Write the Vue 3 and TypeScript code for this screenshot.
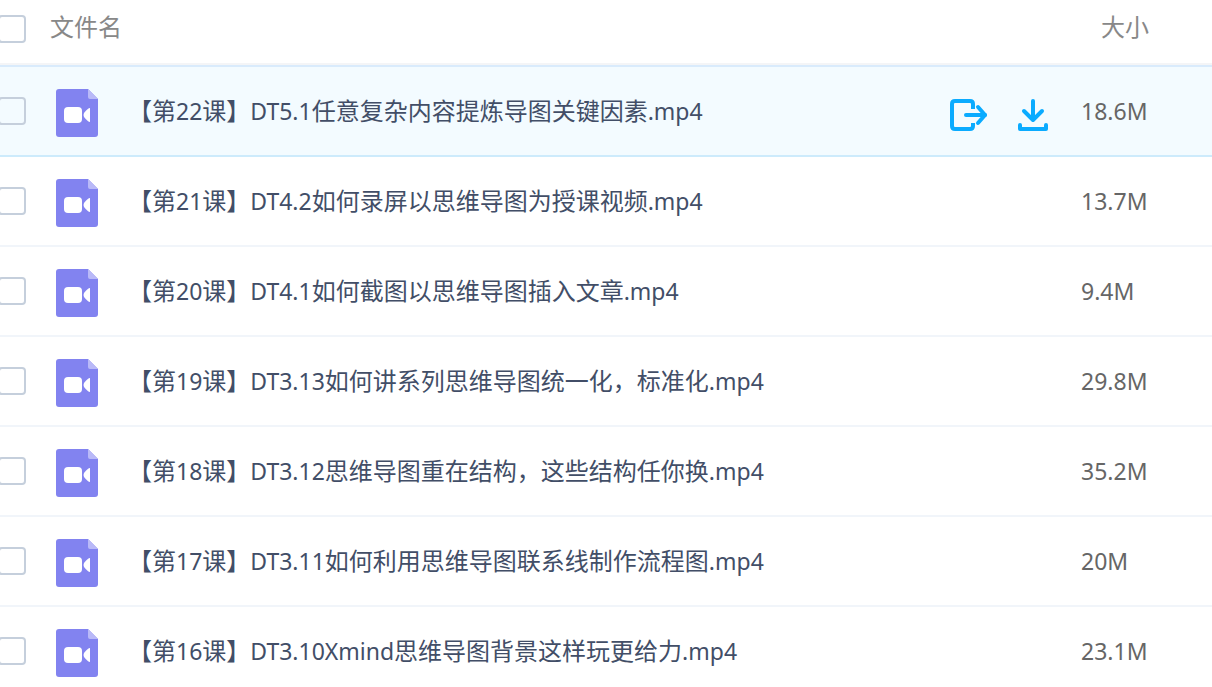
<script setup lang="ts">
import { ref } from 'vue'

interface FileItem {
  id: number
  name: string
  size: string
}

const files: FileItem[] = [
  { id: 22, name: '【第22课】DT5.1任意复杂内容提炼导图关键因素.mp4', size: '18.6M' },
  { id: 21, name: '【第21课】DT4.2如何录屏以思维导图为授课视频.mp4', size: '13.7M' },
  { id: 20, name: '【第20课】DT4.1如何截图以思维导图插入文章.mp4', size: '9.4M' },
  { id: 19, name: '【第19课】DT3.13如何讲系列思维导图统一化，标准化.mp4', size: '29.8M' },
  { id: 18, name: '【第18课】DT3.12思维导图重在结构，这些结构任你换.mp4', size: '35.2M' },
  { id: 17, name: '【第17课】DT3.11如何利用思维导图联系线制作流程图.mp4', size: '20M' },
  { id: 16, name: '【第16课】DT3.10Xmind思维导图背景这样玩更给力.mp4', size: '23.1M' },
]

const activeId = ref(22)
const selected = ref<number[]>([])

function toggleAll(event: Event) {
  const checked = (event.target as HTMLInputElement).checked
  selected.value = checked ? files.map((f) => f.id) : []
}

// Latin runs are set slightly smaller than the Chinese text around them.
function runs(name: string): { text: string; latin: boolean }[] {
  return (name.match(/[\x20-\x7e]+|[^\x20-\x7e]+/g) ?? []).map((text) => ({
    text,
    latin: /^[\x20-\x7e]/.test(text),
  }))
}
</script>

<template>
  <main class="file-list">
    <table class="table" lang="zh-CN">
      <colgroup>
        <col class="col-check" />
        <col />
        <col class="col-actions" />
        <col class="col-size" />
      </colgroup>
      <thead>
        <tr>
          <th scope="col">
            <input
              class="check"
              type="checkbox"
              aria-label="全选"
              :checked="selected.length === files.length"
              @change="toggleAll"
            />
          </th>
          <th scope="col" class="head-text" colspan="2">文件名</th>
          <th scope="col" class="head-text head-size">大小</th>
        </tr>
      </thead>
      <tbody>
        <tr v-for="file in files" :key="file.id" :class="{ active: file.id === activeId }" @mouseenter="activeId = file.id">
          <td>
            <input v-model="selected" class="check" type="checkbox" :value="file.id" :aria-labelledby="`file-${file.id}`" />
          </td>
          <td>
            <div class="name">
              <svg class="file-icon" viewBox="0 0 42 48" aria-hidden="true">
                <path d="M3 0H32L42 10V45Q42 48 39 48H3Q0 48 0 45V3Q0 0 3 0Z" fill="#8283f0" />
                <path d="M32 0L42 10H34Q32 10 32 8Z" fill="#b9b9f8" />
                <rect x="8" y="18" width="18" height="16" rx="4" fill="#fff" />
                <path d="M34 19V33Q32 33 28 28Q27 26 28 24Q32 19 34 19Z" fill="#fff" />
              </svg>
              <span :id="`file-${file.id}`" class="file-name"><span v-for="(run, i) in runs(file.name)" :key="i" :class="{ latin: run.latin }">{{ run.text }}</span></span>
            </div>
          </td>
          <td>
            <div v-if="file.id === activeId" class="actions">
              <button type="button" aria-label="分享">
                <svg width="38" height="32" viewBox="0 0 38 32" fill="none" stroke="#0aabff" stroke-width="4" aria-hidden="true">
                  <path d="M23 10V5Q23 2 20 2H5Q2 2 2 5V27Q2 30 5 30H20Q23 30 23 27V24" />
                  <path d="M16 16H35" stroke-linecap="round" />
                  <path d="M28 8L35 16L28 24" stroke-linecap="round" stroke-linejoin="round" />
                </svg>
              </button>
              <button type="button" aria-label="下载">
                <svg width="32" height="32" viewBox="0 0 32 32" fill="none" stroke="#0aabff" stroke-width="4" stroke-linecap="round" stroke-linejoin="round" aria-hidden="true">
                  <path d="M16 2V20" />
                  <path d="M7 12L16 21L25 12" />
                  <path d="M3 26V30H29V26" />
                </svg>
              </button>
            </div>
          </td>
          <td class="size">{{ file.size }}</td>
        </tr>
      </tbody>
    </table>
  </main>
</template>

<style>
body {
  margin: 0;
  background: #fff;
}
</style>

<style scoped>
.file-list {
  height: 100vh;
  overflow: hidden;
  font-family: "Noto Sans", "Noto Sans CJK SC", sans-serif;
}

.table {
  width: 100%;
  table-layout: fixed;
  border-collapse: separate;
  border-spacing: 0;
}

.col-check {
  width: 50px;
}

.col-actions {
  width: 131px;
}

.col-size {
  width: 131px;
}

th,
td {
  box-sizing: border-box;
  padding: 0;
  text-align: left;
  vertical-align: middle;
  font-weight: 400;
}

th {
  height: 65px;
  padding-bottom: 5px;
  border-bottom: 2px solid #f4f5f7;
  color: #888;
  font-family: "Noto Sans CJK SC", sans-serif;
  font-size: 24px;
  line-height: 32px;
}

.head-text {
  padding-bottom: 12px;
}

td {
  height: 90px;
  border-bottom: 2px solid #f1f5fa;
}

.head-size {
  padding-left: 20px;
}

.active td {
  height: 92px;
  border-top: 2px solid #d9ebfc;
  border-bottom-color: #cdebfc;
  background: #f3fbff;
}

.check {
  display: block;
  appearance: none;
  box-sizing: border-box;
  width: 28px;
  height: 28px;
  margin: 0 0 0 -2px;
  border: 2px solid #c5cfdc;
  border-radius: 4px;
  background: transparent;
}

.check:checked {
  background: #0aabff;
}

.name {
  display: flex;
  align-items: center;
  gap: 30px;
  padding-left: 6px;
}

.file-icon {
  flex: none;
  width: 42px;
  height: 48px;
  padding-top: 4px;
}

.file-name {
  padding-bottom: 2px;
  color: #424e67;
  font-family: "Noto Sans CJK SC", sans-serif;
  font-size: 24px;
  line-height: 32px;
  white-space: nowrap;
}

.latin {
  font-family: "Noto Sans", sans-serif;
  font-size: 23px;
}

.actions {
  display: flex;
  gap: 29px;
  padding-top: 8px;
}

.actions button {
  display: block;
  padding: 0;
  border: 0;
  background: none;
  cursor: pointer;
}

.actions svg {
  display: block;
}

.size {
  color: #666;
  font-size: 23px;
  line-height: 32px;
}
</style>
